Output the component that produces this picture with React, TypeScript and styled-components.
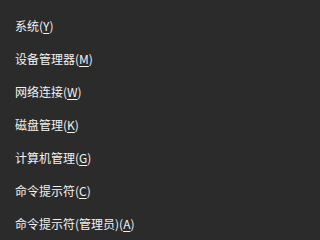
import React from "react";
import styled, { createGlobalStyle } from "styled-components";

const Global = createGlobalStyle`
  html, body { margin: 0; padding: 0; background: #2b2b2b; }
  body { width: 210px; height: 235px; overflow: hidden; }
`;

const Menu = styled.ul`
  list-style: none;
  margin: 0;
  padding: 9px 0 0 0;
  width: 210px;
  height: 235px;
  box-sizing: border-box;
  background: #2b2b2b;
  font-family: "Noto Sans CJK SC", "Noto Sans", sans-serif;
  font-size: 12px;
  color: #f2f2f2;
`;

const Item = styled.li`
  height: 33px;
  display: flex;
  align-items: center;
  padding-left: 15px;
  white-space: nowrap;
`;

const Key = styled.span`
  text-decoration: underline;
  text-underline-offset: 2px;
`;

const items: [string, string, string][] = [
  ["系统(", "Y", ")"],
  ["设备管理器(", "M", ")"],
  ["网络连接(", "W", ")"],
  ["磁盘管理(", "K", ")"],
  ["计算机管理(", "G", ")"],
  ["命令提示符(", "C", ")"],
  ["命令提示符(管理员)(", "A", ")"],
];

export default function App() {
  return (
    <>
      <Global />
      <Menu>
        {items.map(([a, k, b]) => (
          <Item key={a + k}>
            {a}
            <Key>{k}</Key>
            {b}
          </Item>
        ))}
      </Menu>
    </>
  );
}
